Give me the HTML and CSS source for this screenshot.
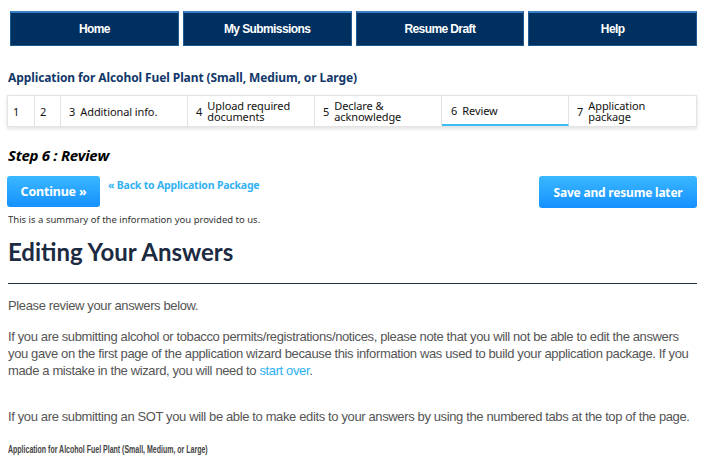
FILE: index.html
```html
<!DOCTYPE html>
<html>
<head>
<meta charset="utf-8">
<link rel="stylesheet" href="styles.css">
</head>
<body>
<nav class="topnav">
  <a class="navbtn">Home</a>
  <a class="navbtn">My Submissions</a>
  <a class="navbtn">Resume Draft</a>
  <a class="navbtn">Help</a>
</nav>
<main class="page">
  <h2 class="apptitle">Application for Alcohol Fuel Plant (Small, Medium, or Large)</h2>
  <div class="steps">
    <div class="step s-num"><span class="n">1</span></div>
    <div class="step s-num"><span class="n">2</span></div>
    <div class="step s-wide"><span class="n">3</span><span class="lbl">Additional info.</span></div>
    <div class="step s-wide"><span class="n">4</span><span class="lbl">Upload required documents</span></div>
    <div class="step s-wide"><span class="n">5</span><span class="lbl">Declare &amp; acknowledge</span></div>
    <div class="step s-wide active"><span class="n">6</span><span class="lbl">Review</span></div>
    <div class="step s-last"><span class="n">7</span><span class="lbl">Application package</span></div>
  </div>
  <h3 class="steptitle">Step 6 : Review</h3>
  <div class="actions">
    <div class="left-actions">
      <a class="btn btn-continue">Continue »</a>
      <a class="backlink">« Back to Application Package</a>
    </div>
    <a class="btn btn-save">Save and resume later</a>
  </div>
  <p class="summary">This is a summary of the information you provided to us.</p>
  <h1 class="heading">Editing Your Answers</h1>
  <hr class="rule">
  <p class="body first">Please review your answers below.</p>
  <p class="body">If you are submitting alcohol or tobacco permits/registrations/notices, please note that you will not be able to edit the answers you gave on the first page of the application wizard because this information was used to build your application package. If you made a mistake in the wizard, you will need to <a class="link">start over</a>.</p>
  <p class="body sot">If you are submitting an SOT you will be able to make edits to your answers by using the numbered tabs at the top of the page.</p>
  <h4 class="subtitle"><span class="subtitle-text">Application for Alcohol Fuel Plant (Small, Medium, or Large)</span></h4>
</main>
</body>
</html>
```
FILE: styles.css
```css
* { box-sizing: border-box; }
body {
  margin: 0;
  background: #fff;
  font-family: "Liberation Sans", Arial, sans-serif;
  color: #333;
}
.topnav {
  display: flex;
  gap: 4px;
  padding: 11px 13px 0 10px;
}
.navbtn {
  flex: 1;
  height: 35px;
  display: flex;
  align-items: center;
  justify-content: center;
  background: #00305f;
  border: 1px solid #1d5a92;
  border-top: 2px solid #3a7fc4;
  color: #fff;
  font-family: "Liberation Sans", Arial, sans-serif;
  font-weight: bold;
  font-size: 12px;
  letter-spacing: -0.6px;
}
.page {
  padding: 0 13px 0 7px;
}
.apptitle {
  margin: 23px 0 0 1px;
  font-family: "Noto Sans", "Open Sans", sans-serif;
  font-weight: bold;
  font-size: 12px;
  line-height: 17px;
  color: #12386a;
  letter-spacing: -0.1px;
}
.steps {
  margin-top: 9px;
  display: flex;
  height: 32px;
  border: 1px solid #e3e3e3;
  box-shadow: 0 2px 4px rgba(0,0,0,0.12);
  font-family: "Noto Sans", "Open Sans", sans-serif;
  font-size: 11px;
  line-height: 11px;
  color: #111;
}
.step {
  display: flex;
  align-items: center;
  border-right: 1px solid #e3e3e3;
  padding-left: 8px;
}
.step:last-child { border-right: none; }
.s-num { width: 27px; padding-left: 5px; }
.s-num + .s-num { width: 26px; }
.s-wide { width: 127px; }
.s-last { flex: 1; }
.step .n { margin-right: 5px; }
.step .lbl { display: block; letter-spacing: -0.1px; }
.s-wide .lbl, .s-last .lbl { max-width: 95px; }
.step.active {
  border-bottom: 2px solid #3cbcf0;
  padding-left: 9px;
}
.steptitle {
  margin: 18px 0 0 1px;
  font-family: "Open Sans", "Noto Sans", sans-serif;
  font-style: italic;
  font-weight: bold;
  font-size: 15px;
  line-height: 20px;
  color: #000;
  letter-spacing: -0.3px;
}
.actions {
  margin-top: 11px;
  display: flex;
  justify-content: space-between;
  align-items: flex-start;
}
.left-actions {
  display: flex;
  align-items: flex-start;
  gap: 8px;
}
.btn {
  display: flex;
  align-items: center;
  justify-content: center;
  background: linear-gradient(#3ab8ff, #1590ff);
  color: #fff;
  font-family: "Noto Sans", "Open Sans", sans-serif;
  font-weight: bold;
  font-size: 12.5px;
  border-radius: 3px;
  letter-spacing: -0.2px;
}
.btn-continue { width: 93px; height: 31px; }
.btn-save { width: 158px; height: 32px; font-size: 12px; }
.backlink {
  margin-top: 2px;
  font-family: "Noto Sans", "Open Sans", sans-serif;
  font-weight: bold;
  font-size: 10.5px;
  color: #33b1f2;
  letter-spacing: -0.2px;
}
.summary {
  margin: 5px 0 0 1px;
  font-family: "Noto Sans", "Open Sans", sans-serif;
  font-size: 9.5px;
  line-height: 14px;
  color: #333;
}
.heading {
  margin: 10px 0 0 1px;
  font-family: "Lato", "Noto Sans", sans-serif;
  font-weight: bold;
  font-size: 24px;
  line-height: 30px;
  color: #1c2b42;
}
.rule {
  margin: 16px 0 0 1px;
  border: none;
  border-top: 1px solid #26324a;
}
.body {
  margin: 0 0 0 1px;
  font-size: 13px;
  line-height: 17px;
  color: #555;
  letter-spacing: -0.37px;
}
.body.first { margin-top: 13px; margin-bottom: 14px; }
.sot { margin-top: 29px; }
.link { color: #2cb0f0; }
.subtitle {
  margin: 18px 0 0 1px;
  font-size: 10px;
  line-height: 14px;
  font-weight: bold;
  color: #444;
}
.subtitle-text {
  display: inline-block;
  transform: scaleX(0.7);
  transform-origin: left center;
  white-space: nowrap;
}
```
